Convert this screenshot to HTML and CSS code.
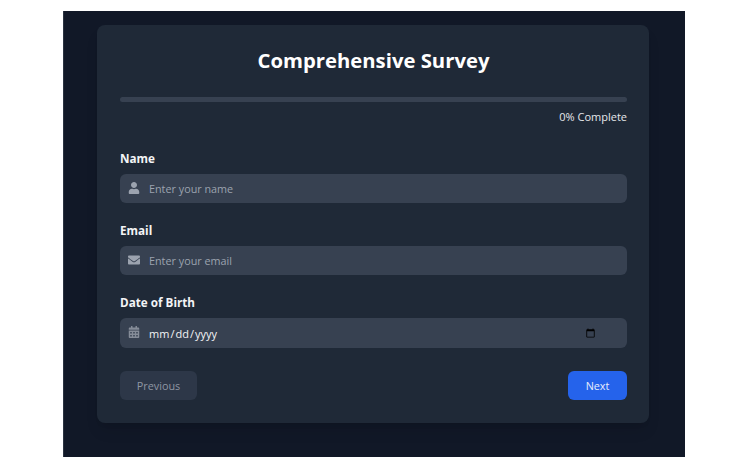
FILE: index.html
```html
<!DOCTYPE html>
<html lang="en">
<head>
<meta charset="utf-8">
<title>Comprehensive Survey</title>
<link rel="stylesheet" href="styles.css">
</head>
<body>
<main class="frame">
  <form class="card">
    <h1 class="title">Comprehensive Survey</h1>
    <div class="progress"><div class="progress-fill"></div></div>
    <p class="progress-text">0% Complete</p>
    <div class="fields">
      <div class="field">
        <label class="label" for="name">Name</label>
        <div class="control">
          <svg class="icon" viewBox="0 0 512 512"><path transform="translate(32 0)" d="M224 256c70.7 0 128-57.3 128-128S294.7 0 224 0 96 57.3 96 128s57.3 128 128 128zm89.6 32h-16.7c-22.2 10.2-46.9 16-72.9 16s-50.6-5.8-72.9-16h-16.7C60.2 288 0 348.2 0 422.4V464c0 26.5 21.5 48 48 48h352c26.5 0 48-21.5 48-48v-41.6c0-74.2-60.2-134.4-134.4-134.4z"/></svg>
          <input class="input" id="name" type="text" placeholder="Enter your name">
        </div>
      </div>
      <div class="field">
        <label class="label" for="email">Email</label>
        <div class="control">
          <svg class="icon" viewBox="0 0 512 512"><path d="M502.3 190.8c3.9-3.1 9.7-.2 9.7 4.7V400c0 26.5-21.5 48-48 48H48c-26.5 0-48-21.5-48-48V195.6c0-5 5.7-7.8 9.7-4.7 22.4 17.4 52.1 39.5 154.1 113.6 21.1 15.4 56.7 47.8 92.2 47.6 35.7.3 72-32.8 92.3-47.6 102-74.1 131.6-96.3 154-113.7zM256 320c23.2.4 56.6-29.2 73.4-41.4 132.7-96.3 142.8-104.7 173.4-128.7 5.8-4.5 9.2-11.5 9.2-18.9v-19c0-26.5-21.5-48-48-48H48C21.5 64 0 85.5 0 112v19c0 7.4 3.4 14.3 9.2 18.9 30.6 23.9 40.7 32.4 173.4 128.7 16.8 12.2 50.2 41.8 73.4 41.4z"/></svg>
          <input class="input" id="email" type="email" placeholder="Enter your email">
        </div>
      </div>
      <div class="field">
        <label class="label" for="dob">Date of Birth</label>
        <div class="control">
          <svg class="icon icon-dim" viewBox="0 0 512 512"><path transform="translate(32 0)" d="M0 464c0 26.5 21.5 48 48 48h352c26.5 0 48-21.5 48-48V192H0v272zm320-196c0-6.6 5.4-12 12-12h40c6.6 0 12 5.4 12 12v40c0 6.6-5.4 12-12 12h-40c-6.6 0-12-5.4-12-12v-40zm0 128c0-6.6 5.4-12 12-12h40c6.6 0 12 5.4 12 12v40c0 6.6-5.4 12-12 12h-40c-6.6 0-12-5.4-12-12v-40zM192 268c0-6.6 5.4-12 12-12h40c6.6 0 12 5.4 12 12v40c0 6.6-5.4 12-12 12h-40c-6.6 0-12-5.4-12-12v-40zm0 128c0-6.6 5.4-12 12-12h40c6.6 0 12 5.4 12 12v40c0 6.6-5.4 12-12 12h-40c-6.6 0-12-5.4-12-12v-40zM64 268c0-6.6 5.4-12 12-12h40c6.6 0 12 5.4 12 12v40c0 6.6-5.4 12-12 12H76c-6.6 0-12-5.4-12-12v-40zm0 128c0-6.6 5.4-12 12-12h40c6.6 0 12 5.4 12 12v40c0 6.6-5.4 12-12 12H76c-6.6 0-12-5.4-12-12v-40zM400 64h-48V16c0-8.8-7.2-16-16-16h-32c-8.8 0-16 7.2-16 16v48H160V16c0-8.8-7.2-16-16-16h-32c-8.8 0-16 7.2-16 16v48H48C21.5 64 0 85.5 0 112v48h448v-48c0-26.5-21.5-48-48-48z"/></svg>
          <input class="input input-date" id="dob" type="date">
        </div>
      </div>
    </div>
    <div class="actions">
      <button class="btn btn-prev" type="button" disabled>Previous</button>
      <button class="btn btn-next" type="button">Next</button>
    </div>
  </form>
</main>
</body>
</html>
```

FILE: styles.css
```css
* { box-sizing: border-box; }

html, body { height: 100%; }

body {
  margin: 0;
  background: #fff;
  font-family: "Open Sans", "Noto Sans", sans-serif;
  padding: 11px 65px 12px 63px;
}

.frame {
  height: 446px;
  background: #111827;
  border-left: 1px solid #2b3341;
  padding: 14px 36px 34px 33px;
}

.card {
  height: 398px;
  background: #1f2937;
  border-radius: 8px;
  padding: 19px 22px 23px 23px;
  box-shadow: 0 10px 15px -3px rgba(0, 0, 0, .1), 0 4px 6px -4px rgba(0, 0, 0, .1);
}

.title {
  margin: 0;
  height: 32px;
  line-height: 32px;
  font-size: 20.3px;
  font-weight: 700;
  color: #fff;
  text-align: center;
}

.progress {
  margin-top: 21px;
  height: 5px;
  background: #374151;
  border-radius: 3px;
  overflow: hidden;
}

.progress-fill {
  width: 0;
  height: 100%;
  background: #2563eb;
}

.progress-text {
  margin: 6px 0 0;
  height: 17px;
  line-height: 17px;
  font-size: 11px;
  color: #e5e7eb;
  text-align: right;
}

.fields {
  display: flex;
  flex-direction: column;
  gap: 18px;
  margin-top: 24px;
}

.label {
  display: block;
  height: 18px;
  line-height: 18px;
  font-size: 11.7px;
  font-weight: 700;
  color: #f3f4f6;
  margin-bottom: 7px;
}

.control { position: relative; }

.icon {
  position: absolute;
  left: 8px;
  top: 8px;
  width: 12px;
  height: 12px;
  fill: #9ca3af;
}

.icon-dim { fill: #858c98; }

.input {
  display: block;
  width: 100%;
  height: 29px;
  border: 0;
  outline: 0;
  border-radius: 6px;
  background: #374151;
  padding: 0 12px 0 29px;
  font-family: inherit;
  font-size: 10.8px;
  color: #f3f4f6;
}

.input::placeholder { color: #9ca3af; opacity: 1; }

.input-date {
  height: 30px;
  padding-left: 28px;
  padding-right: 29px;
  font-size: 11px;
}

.actions {
  display: flex;
  justify-content: space-between;
  margin-top: 23px;
}

.btn {
  height: 29px;
  border: 0;
  border-radius: 6px;
  font-family: inherit;
  font-size: 10.8px;
}

.btn-prev {
  width: 77px;
  background: #2d3748;
  color: #8f96a3;
}

.btn-next {
  width: 59px;
  background: #2563eb;
  color: #e8eefc;
}
```
